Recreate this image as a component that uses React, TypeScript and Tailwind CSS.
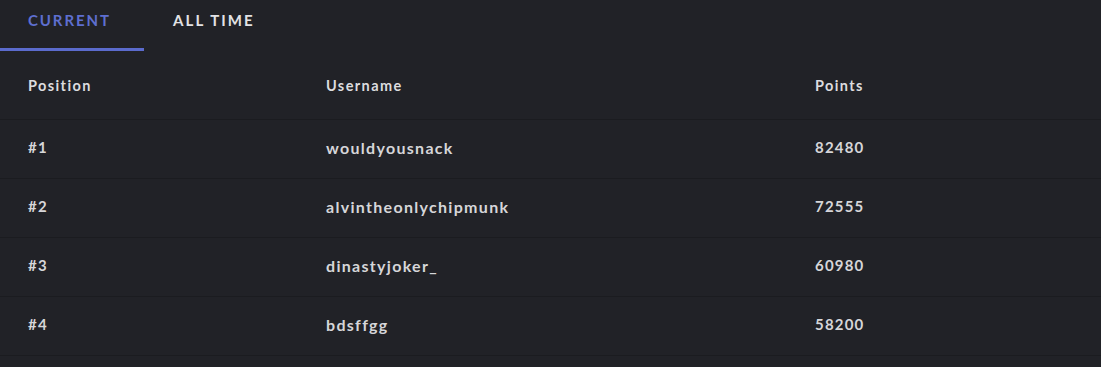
import React, { useState } from "react";

const rows = [
  { position: "#1", username: "wouldyousnack", points: 82480 },
  { position: "#2", username: "alvintheonlychipmunk", points: 72555 },
  { position: "#3", username: "dinastyjoker_", points: 60980 },
  { position: "#4", username: "bdsffgg", points: 58200 },
];

export default function App() {
  const [tab, setTab] = useState("current");

  return (
    <div className="min-h-[367px] w-full bg-[#212227] text-[#d6d6d9] font-['Lato','Open_Sans',sans-serif]">
      <div className="flex h-[51px]">
        <button
          onClick={() => setTab("current")}
          className={`w-[144px] pl-7 pb-[8px] text-left text-[15px] font-bold tracking-[1.9px] border-b-[3px] ${
            tab === "current"
              ? "text-[#5e6fd0] border-[#5b6bcd]"
              : "text-[#e2e2e5] border-transparent"
          }`}
        >
          CURRENT
        </button>
        <button
          onClick={() => setTab("all")}
          className={`w-[140px] pl-[29px] pb-[8px] text-left text-[15px] font-bold tracking-[2.1px] border-b-[3px] ${
            tab === "all"
              ? "text-[#5e6fd0] border-[#5b6bcd]"
              : "text-[#e2e2e5] border-transparent"
          }`}
        >
          ALL TIME
        </button>
      </div>

      <div className="grid grid-cols-[298px_489px_1fr] pl-7 pt-[2px] h-[69px] items-center border-b border-[#1b1c20] text-[14.5px] tracking-[1.4px] font-bold text-[#dcdcdf]">
        <div>Position</div>
        <div>Username</div>
        <div>Points</div>
      </div>

      {rows.map((row) => (
        <div
          key={row.position}
          className="grid grid-cols-[298px_489px_1fr] pl-7 pb-[3px] h-[59px] items-center border-b border-[#1b1c20] font-bold"
        >
          <div className="text-[15px] tracking-[1.2px]">{row.position}</div>
          <div className="text-[16px] tracking-[1.3px]">{row.username}</div>
          <div className="text-[15px] tracking-[1.2px]">{row.points}</div>
        </div>
      ))}
    </div>
  );
}
